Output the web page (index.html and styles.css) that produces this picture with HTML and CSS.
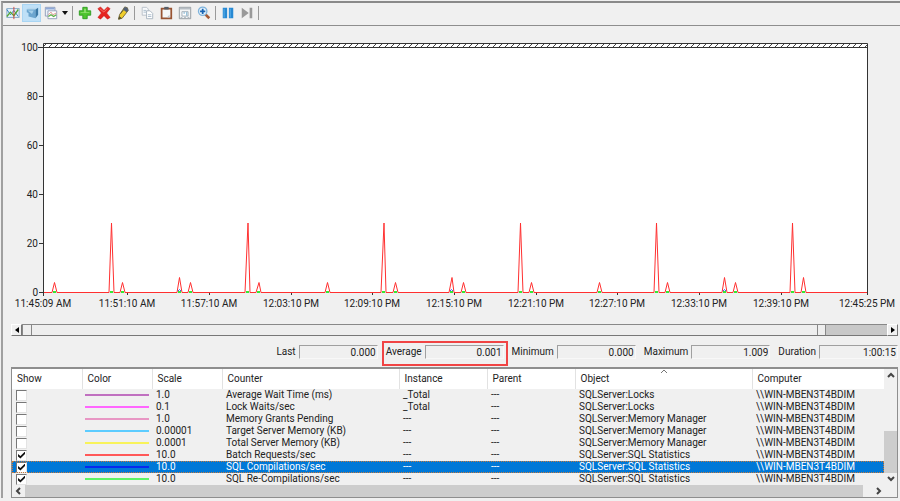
FILE: index.html
```html
<!DOCTYPE html>
<html lang="en">
<head>
    <meta charset="utf-8">
    <title>Performance Monitor</title>
    <link rel="stylesheet" href="styles.css">
</head>
<body>
    <div class="monitor">
        <div class="toolbar">
            <button class="tool" aria-label="View current activity">
                <svg viewBox="0 0 16 16"><rect x="1" y="3" width="14" height="10" fill="#e4f1fa" stroke="#7ba3c4"/><path d="M1 4l4 6 4-5 5 7" stroke="#2474b8" fill="none"/><path d="M1 12l4-5 4 4 5-7" stroke="#55a532" fill="none" stroke-width="1.5"/><path d="M9 1v14" stroke="#d3392f"/></svg>
            </button>
            <button class="tool active" aria-label="View log data">
                <svg viewBox="0 0 16 16"><path d="M1 4l3-2h11l-3 2z" fill="#b8d8ee"/><path d="M2 4h10v10l-8-2V8L2 7z" fill="#6ba5cf"/><path d="M12 4l3-2v8l-3 4z" fill="#3a78a6"/><path d="M3 5h7L8 9z" fill="#a6d0ea"/></svg>
            </button>
            <button class="tool" aria-label="Change graph type">
                <svg viewBox="0 0 16 16"><path d="M1.500 1.500h11v10h-11z" fill="#eef3fa" stroke="#8998b5"/><path d="M2 3h10" stroke="#8fa9d8" stroke-width="2"/><path d="M4.500 5.500h10v9h-10z" fill="#fff" stroke="#8998b5"/><path d="M5 10l3-3 2 3 4-2" stroke="#d98a88" fill="none"/><path d="M5 12l3-2 3 2 3-2" stroke="#5daf46" fill="none" stroke-width="1.500"/></svg>
            </button>
            <button class="caret" aria-label="More graph types"><svg viewBox="0 0 6 4"><path d="M0 0h6L3 4z" fill="#111"/></svg></button>
            <span class="sep"></span>
            <button class="tool" aria-label="Add">
                <svg viewBox="0 0 16 16"><path d="M5.500 1.500h5v4h4v5h-4v4h-5v-4h-4v-5h4z" fill="#4fc52f" stroke="#2c9a20"/><path d="M7 3h2v4h4v1H3V7h4z" fill="#90e070"/></svg>
            </button>
            <button class="tool" aria-label="Delete">
                <svg viewBox="0 0 16 16"><path d="M1 3l3-2 4 4 4-4 3 2-4 5 4 5-3 2-4-4-4 4-3-2 4-5z" fill="#e62521" stroke="#c61a18" stroke-width=".6"/><path d="M3 3l5 4 4-4" stroke="#f6746a" fill="none"/></svg>
            </button>
            <button class="tool" aria-label="Highlight">
                <svg viewBox="0 0 16 16"><path d="M10 1l3 1 1 3-7 9-4 1 1-5z" fill="#f0ce2c" stroke="#6f6538"/><path d="M10 1l3 1 1 3-2 2-4-3z" fill="#526179"/><path d="M5 9l4-5M3 15l1-3 2 2z" stroke="#655c2c" fill="#30343a"/></svg>
            </button>
            <span class="sep"></span>
            <button class="tool" aria-label="Copy properties">
                <svg viewBox="0 0 16 16"><path d="M2.500 1.500h5l2 2v7h-7z" fill="#f7f9fb" stroke="#b5bdc6"/><path d="M7.500 5.500h4l3 3v6h-7z" fill="#fff" stroke="#a3b0bd"/><path d="M4 5h3M4 7h3M9 10h4M9 12h4" stroke="#a5b7c8"/></svg>
            </button>
            <button class="tool" aria-label="Paste counter list">
                <svg viewBox="0 0 16 16"><path d="M3 3h11v11H3z" fill="#f5f7f7" stroke="#985433" stroke-width="2"/><path d="M6 1h5v3H6z" fill="#555e68"/><path d="M12 13v-3l-3 3z" fill="#b9c1c9"/></svg>
            </button>
            <button class="tool" aria-label="Properties">
                <svg viewBox="0 0 16 16"><path d="M1.500 1.500h13v13h-13z" fill="#f4f5f5" stroke="#8b9298"/><path d="M2 3h12" stroke="#b7bec4" stroke-width="2"/><path d="M4.500 6.500h7v5h-7zM3 13h2M7 13h2M11 13h2" stroke="#9aa8b3" fill="#fff"/><path d="M10 7v4M7 7v2" stroke="#62a4c9"/></svg>
            </button>
            <button class="tool" aria-label="Zoom">
                <svg viewBox="0 0 16 16"><path d="M9 9l5 5" stroke="#a65b36" stroke-width="3"/><circle cx="6.500" cy="6" r="4.800" fill="#e6f3fc" stroke="#7eb3dc" stroke-width="1.500"/><path d="M6.500 3v6M3.500 6h6" stroke="#1764b4" stroke-width="2"/></svg>
            </button>
            <span class="sep"></span>
            <button class="tool" aria-label="Freeze display">
                <svg viewBox="0 0 16 16"><path d="M2 2h5v12H2zM9 2h5v12H9z" fill="#2789d3"/><path d="M3 3h1v10H3zM10 3h1v10h-1z" fill="#60b2e9"/></svg>
            </button>
            <button class="tool" aria-label="Update data">
                <svg viewBox="0 0 16 16"><path d="M2 2l8 6-8 6zM11 2h3v12h-3z" fill="#999"/></svg>
            </button>
            <span class="sep"></span>
        </div>

        <svg class="chart" viewBox="3 26 897 292" role="img" aria-label="Counter graph">
            <defs>
                <pattern id="hatch" width="6" height="5" patternUnits="userSpaceOnUse" y="43">
                    <path d="M0 5L5 0" stroke="#444" stroke-width="1"/>
                </pattern>
            </defs>
            <rect x="43" y="43" width="824" height="249" fill="#fff"/>
            <rect x="43" y="43" width="824" height="4" fill="url(#hatch)"/>
            <g class="axis">
                <path d="M43.500 292V43.500h824V292M38 47.500h829"/>
                <path d="M39 96.500h4M39 145.500h4M39 194.500h4M39 243.500h4M39 292.500h4"/>
                <path d="M43.500 292v4M127.500 292v3M209.500 292v3M291.500 292v3M372.500 292v3M454.500 292v3M536.500 292v3M617.500 292v3M699.500 292v3M781.500 292v3M867.500 292v3"/>
            </g>
            <g class="y-labels">
                <text x="38" y="51">100</text>
                <text x="38" y="100">80</text>
                <text x="38" y="149">60</text>
                <text x="38" y="198">40</text>
                <text x="38" y="247">20</text>
                <text x="38" y="296">0</text>
            </g>
            <g class="x-labels">
                <text x="43" y="307">11:45:09 AM</text>
                <text x="127" y="307">11:51:10 AM</text>
                <text x="209" y="307">11:57:10 AM</text>
                <text x="291" y="307">12:03:10 PM</text>
                <text x="372" y="307">12:09:10 PM</text>
                <text x="454" y="307">12:15:10 PM</text>
                <text x="536" y="307">12:21:10 PM</text>
                <text x="617" y="307">12:27:10 PM</text>
                <text x="699" y="307">12:33:10 PM</text>
                <text x="781" y="307">12:39:10 PM</text>
                <text x="867" y="307">12:45:25 PM</text>
            </g>
            <!-- batch requests -->
            <path class="line-batch" d="M44 292.500H52L54.500 282.500 57 292.500H109L111.500 223 114 292.500H120L122.500 282.500 125 292.500H177L179.500 277.500 182 292.500H188L190.500 282.500 193 292.500H245L248 223 250 292.500H256L259 282.500 261 292.500H325L327.500 282.500 330 292.500H381L384 223 386 292.500H393L395.500 282.500 398 292.500H449L452 277.500 454 292.500H461L463.500 282.500 466 292.500H518L520.500 223 523 292.500H529L531.500 282.500 534 292.500H597L599.500 282.500 602 292.500H654L656.500 223 659 292.500H665L667.500 282.500 670 292.500H722L724.500 277.500 727 292.500H733L735.500 282.500 738 292.500H790L792.500 223 795 292.500H801L803.500 277.500 806 292.500H867"/>
            <path class="line-comp" d="M178 291l1.500-1.500 1.500 1.500M450 291l1.500-1.500 1.500 1.500M723 291l1.500-1.500 1.500 1.500"/>
            <path class="line-recomp" d="M53 292h3M110 292h3M121 292h3M178 292h3M189 292h3M246 292h3M257 292h3M326 292h3M382 292h3M394 292h3M450 292h3M462 292h3M519 292h3M530 292h3M598 292h3M655 292h3M666 292h3M723 292h3M734 292h3M791 292h3M802 292h3"/>
        </svg>

        <div class="time-range">
            <button class="range-btn" aria-label="Earlier"><svg viewBox="0 0 4 6"><path d="M4 0v6L0 3z"/></svg></button>
            <div class="range-track">
                <div class="range-window"><span class="grip"></span><span class="grip"></span></div>
            </div>
            <button class="range-btn" aria-label="Later"><svg viewBox="0 0 4 6"><path d="M0 0v6l4-3z"/></svg></button>
        </div>

        <div class="stats">
            <div class="stat"><label for="last">Last</label><input id="last" type="text" value="0.000" readonly></div>
            <div class="stat marked"><label for="average">Average</label><input id="average" type="text" value="0.001" readonly></div>
            <div class="stat"><label for="minimum">Minimum</label><input id="minimum" type="text" value="0.000" readonly></div>
            <div class="stat"><label for="maximum">Maximum</label><input id="maximum" type="text" value="1.009" readonly></div>
            <div class="stat"><label for="duration">Duration</label><input id="duration" type="text" value="1:00:15" readonly></div>
        </div>

        <div class="legend">
            <div class="legend-main">
                <table>
                    <colgroup>
                        <col class="c-small"><col class="c-small"><col class="c-small"><col class="c-wide">
                        <col class="c-mid"><col class="c-mid"><col class="c-wide"><col>
                    </colgroup>
                    <thead>
                        <tr><th>Show</th><th>Color</th><th>Scale</th><th>Counter</th><th>Instance</th><th>Parent</th><th class="sorted">Object<svg viewBox="0 0 8 4"><path d="M1 4l3-3 3 3"/></svg></th><th>Computer</th></tr>
                    </thead>
                    <tbody>
                        <tr><td><input type="checkbox" aria-label="Show Average Wait Time (ms)"></td><td><hr class="purple"></td><td>1.0</td><td>Average Wait Time (ms)</td><td>_Total</td><td>---</td><td>SQLServer:Locks</td><td>\\WIN-MBEN3T4BDIM</td></tr>
                        <tr><td><input type="checkbox" aria-label="Show Lock Waits/sec"></td><td><hr class="magenta"></td><td>0.1</td><td>Lock Waits/sec</td><td>_Total</td><td>---</td><td>SQLServer:Locks</td><td>\\WIN-MBEN3T4BDIM</td></tr>
                        <tr><td><input type="checkbox" aria-label="Show Memory Grants Pending"></td><td><hr class="pink"></td><td>1.0</td><td>Memory Grants Pending</td><td>---</td><td>---</td><td>SQLServer:Memory Manager</td><td>\\WIN-MBEN3T4BDIM</td></tr>
                        <tr><td><input type="checkbox" aria-label="Show Target Server Memory (KB)"></td><td><hr class="sky"></td><td>0.00001</td><td>Target Server Memory (KB)</td><td>---</td><td>---</td><td>SQLServer:Memory Manager</td><td>\\WIN-MBEN3T4BDIM</td></tr>
                        <tr><td><input type="checkbox" aria-label="Show Total Server Memory (KB)"></td><td><hr class="yellow"></td><td>0.0001</td><td>Total Server Memory (KB)</td><td>---</td><td>---</td><td>SQLServer:Memory Manager</td><td>\\WIN-MBEN3T4BDIM</td></tr>
                        <tr><td><input type="checkbox" aria-label="Show Batch Requests/sec" checked></td><td><hr class="red"></td><td>10.0</td><td>Batch Requests/sec</td><td>---</td><td>---</td><td>SQLServer:SQL Statistics</td><td>\\WIN-MBEN3T4BDIM</td></tr>
                        <tr class="selected"><td><input type="checkbox" aria-label="Show SQL Compilations/sec" checked></td><td><hr class="blue"></td><td>10.0</td><td>SQL Compilations/sec</td><td>---</td><td>---</td><td>SQLServer:SQL Statistics</td><td>\\WIN-MBEN3T4BDIM</td></tr>
                        <tr><td><input type="checkbox" aria-label="Show SQL Re-Compilations/sec" checked></td><td><hr class="green"></td><td>10.0</td><td>SQL Re-Compilations/sec</td><td>---</td><td>---</td><td>SQLServer:SQL Statistics</td><td>\\WIN-MBEN3T4BDIM</td></tr>
                    </tbody>
                </table>
                <div class="vscroll">
                    <button aria-label="Scroll up"><svg viewBox="0 0 8 8"><path d="M1 6l3-3 3 3"/></svg></button>
                    <div class="vtrack"><div class="vthumb"></div></div>
                    <button aria-label="Scroll down"><svg viewBox="0 0 8 8"><path d="M1 2l3 3 3-3"/></svg></button>
                </div>
            </div>
            <div class="hscroll">
                <button aria-label="Scroll left"><svg viewBox="0 0 8 8"><path d="M5 1L2 4l3 3"/></svg></button>
                <div class="htrack"><div class="hthumb"></div></div>
                <button aria-label="Scroll right"><svg viewBox="0 0 8 8"><path d="M3 1l3 3-3 3"/></svg></button>
            </div>
        </div>
    </div>
</body>
</html>
```

FILE: styles.css
```css
* {
    box-sizing: border-box;
}

body {
    margin: 0;
    padding: 1px 0 0 1px;
    background-color: #f0f0f0;
    color: #222;
    font-family: Roboto, "Liberation Sans", sans-serif;
    font-size: 10px;
    line-height: 12px;
}

button {
    display: flex;
    align-items: center;
    justify-content: center;
    padding: 0;
    border: none;
    background: none;
}

.monitor {
    border-top: 2px solid #8a8a8a;
    border-left: 2px solid #a0a0a0;
}

/* toolbar */
.toolbar {
    display: flex;
    align-items: center;
    height: 23px;
    border-bottom: 1px solid #8e8e8e;
    padding-bottom: 2px;
}

.tool {
    width: 19px;
    height: 18px;
}

.tool svg {
    width: 14px;
    height: 14px;
}

.tool.active {
    background-color: #bfe0f7;
    border: 1px solid #a9d5f3;
}

.caret {
    width: 10px;
    height: 18px;
}

.caret svg {
    width: 6px;
    height: 4px;
}

.sep {
    width: 1px;
    height: 14px;
    margin: 0 2px;
    background-color: #999;
}

/* graph */
.chart {
    display: block;
    width: 100%;
}

.chart text {
    font-size: 10px;
    fill: #222;
}

.axis path {
    fill: none;
    stroke: #333;
}

.y-labels {
    text-anchor: end;
}

.x-labels {
    text-anchor: middle;
}

.line-batch {
    fill: none;
    stroke: #ff3030;
}

.line-comp {
    fill: none;
    stroke: #3a5cff;
}

.line-recomp {
    stroke: #35e835;
    stroke-width: 2;
}

/* time range bar */
.time-range {
    display: flex;
    height: 12px;
    margin: 6px 2px 9px 8px;
}

.range-btn {
    width: 11px;
    background-color: #f0f0f0;
    border: 1px solid #fff;
    border-right-color: #777;
    border-bottom-color: #777;
}

.range-btn svg {
    width: 4px;
    height: 6px;
}

.range-track {
    flex: 1;
    background-color: #c8c8c8;
    border-top: 1px solid #888;
    border-bottom: 1px solid #777;
}

.range-window {
    display: flex;
    justify-content: space-between;
    width: 93%;
    height: 10px;
    background-color: #eee;
    border: 1px solid #888;
    border-width: 0 1px;
}

.grip {
    width: 9px;
    border-right: 1px solid #888;
}

.grip:last-child {
    width: 8px;
    border-right: none;
    border-left: 1px solid #888;
}

/* value bar */
.stats {
    display: flex;
    justify-content: flex-end;
    gap: 8px;
    padding: 0 2px 5px 0;
}

.stat {
    display: flex;
    align-items: flex-start;
    gap: 3px;
    height: 17px;
}

.stat label {
    line-height: 14px;
}

.stat input {
    width: 79px;
    height: 14px;
    padding: 0 1px;
    border: 1px solid #f8f8f8;
    border-top-color: #a0a0a0;
    border-left-color: #a0a0a0;
    background-color: #f0f0f0;
    color: inherit;
    font: inherit;
    text-align: right;
}

.marked {
    outline: 2px solid #f04444;
    outline-offset: 2px;
}

/* counter list */
.legend {
    margin: 0 2px 0 8px;
    border: 1px solid #8e8e8e;
    border-top-width: 2px;
}

.legend-main {
    display: flex;
}

table {
    flex: 1;
    table-layout: fixed;
    border-collapse: collapse;
}

.c-small {
    width: 70px;
}

.c-mid {
    width: 88px;
}

.c-wide {
    width: 177px;
}

th {
    height: 20px;
    padding: 0 5px;
    background-color: #fff;
    border-right: 1px solid #e2e2e2;
    font-weight: normal;
    text-align: left;
}

th:last-child {
    border-right: none;
}

.sorted {
    position: relative;
}

.sorted svg {
    position: absolute;
    top: 0;
    left: 48%;
    width: 8px;
    height: 4px;
    fill: none;
    stroke: #777;
}

td {
    height: 12px;
    padding: 0 4px;
    white-space: nowrap;
}

td:nth-child(2) {
    padding: 0 3px;
}

.selected {
    background-color: #0078d7;
    color: #fff;
    outline: 1px dotted #c67a3c;
    outline-offset: -1px;
}

input[type="checkbox"] {
    appearance: none;
    display: block;
    width: 11px;
    height: 11px;
    margin: 0;
    background-color: #fff;
    border: 1px solid #e3e3e3;
    border-top-color: #777;
    border-left-color: #777;
}

input[type="checkbox"]:checked::before {
    content: "";
    display: block;
    width: 7px;
    height: 7px;
    margin: 1px;
    background-color: #111;
    clip-path: polygon(0 35%, 35% 65%, 100% 0, 100% 35%, 35% 100%, 0 70%);
}

hr {
    height: 2px;
    margin: 0;
    border: none;
}

.purple { background-color: #c070c0; }
.magenta { background-color: #ff66ff; }
.pink { background-color: #e896c4; }
.sky { background-color: #5cccff; }
.yellow { background-color: #f8f35a; }
.red { background-color: #ff5858; }
.blue { background-color: #0828ee; }
.green { background-color: #5cf566; }

/* list scrollbars */
.vscroll {
    display: flex;
    flex-direction: column;
    width: 13px;
}

.vscroll button,
.hscroll button {
    width: 13px;
    height: 12px;
}

.vscroll svg,
.hscroll svg {
    width: 8px;
    height: 8px;
    fill: none;
    stroke: #444;
    stroke-width: 2;
}

.vtrack {
    display: flex;
    flex-direction: column;
    justify-content: flex-end;
    flex: 1;
}

.vthumb {
    height: 46%;
    background-color: #cdcdcd;
}

.hscroll {
    display: flex;
    padding-right: 13px;
}

.htrack {
    flex: 1;
}

.hthumb {
    width: 99%;
    height: 12px;
    background-color: #cdcdcd;
}
```
